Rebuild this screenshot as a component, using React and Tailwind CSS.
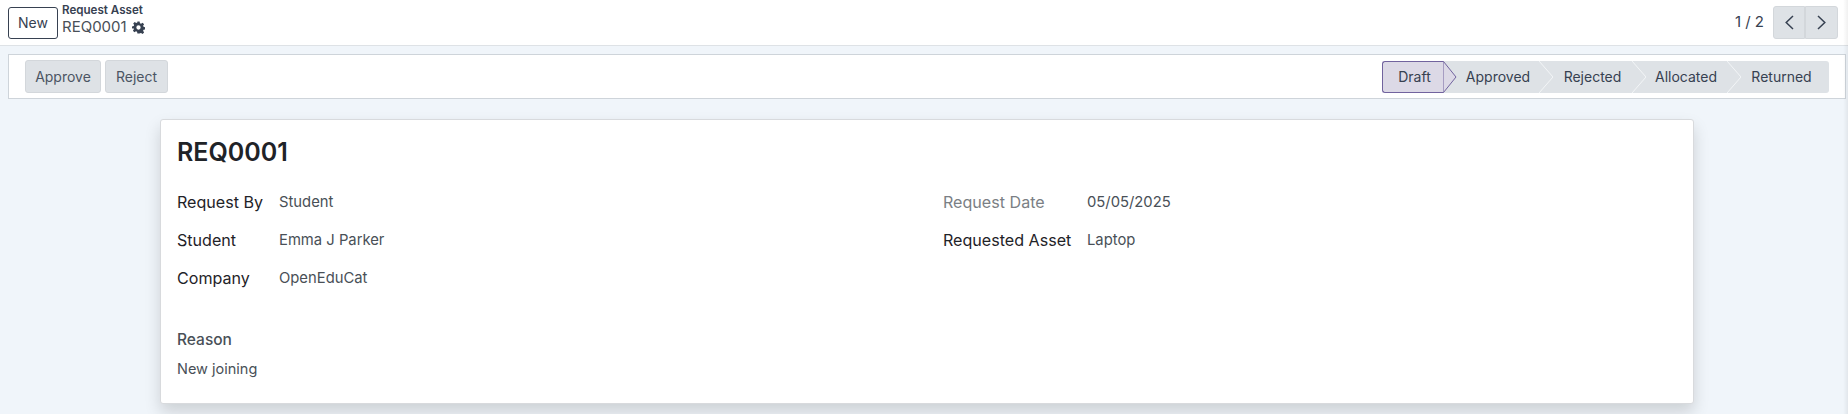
import React from "react";

const Gear = () => (
  <svg width="13" height="13" viewBox="0 0 24 24" className="ml-[5px] mt-[1px]">
    <path fill="#374151" fillRule="evenodd" d="M10 1h4l.7 3.2 2 .8 2.8-1.8 2.8 2.8-1.8 2.8.8 2 3.2.7v4l-3.2.7-.8 2 1.800 2.800-2.800 2.800-2.800-1.800-2 .8L14 23h-4l-.7-3.200-2-.8-2.800 1.800-2.800-2.800 1.800-2.800-.8-2L0 14v-4l3.200-.7.8-2L2.200 4.500 5 1.700l2.800 1.800 2-.8zM12 8a4 4 0 1 0 0 8 4 4 0 0 0 0-8z" />
  </svg>
);

const Chevron = ({ d }) => (
  <svg width="9" height="15" viewBox="0 0 9 15" fill="none" stroke="#374151" strokeWidth="1.500">
    <path d={d} />
  </svg>
);

const Stage = ({ label, active, w }) => (
  <div className={`relative h-[32px] flex items-center justify-center ${w} ${active ? "bg-[#dcd9e6] border border-[#71639e] border-r-0 rounded-l-[3px] z-10 pl-[3px]" : "bg-[#dee2e6]"}`}>
    <span className="text-[14px] text-[#374151]">{label}</span>
    {active ? (
      <svg className="absolute left-full -top-px" width="14" height="32" viewBox="0 0 14 32">
        <path d="M0 0.500 L0.500 0.500 L13 16 L0.500 31.500 L0 31.500 Z" fill="#dcd9e6" stroke="#71639e" />
      </svg>
    ) : null}
  </div>
);

const Sep = () => (
  <svg className="absolute left-full top-0 z-[5]" width="14" height="32" viewBox="0 0 14 32">
    <path d="M0 0 L14 16 L0 32" fill="#dee2e6" stroke="#f3f5f7" strokeWidth="1" />
  </svg>
);

const Field = ({ label, value, muted, w }) => (
  <div className="flex items-center h-[38px]">
    <div className={`${w} text-[16.100px] ${muted ? "text-[#7b7f85]" : "text-[#1f2328]"}`}>{label}</div>
    <div className="text-[14.800px] text-[#495057]">{value}</div>
  </div>
);

export default function App() {
  return (
    <div className="relative w-[1848px] h-[414px] overflow-hidden bg-[#f0f5fa] font-['Inter',sans-serif]">
      <div className="h-[46px] bg-white border-b border-[#dee2e6] flex items-center pl-[8px] pr-[10px]">
        <button className="w-[50px] h-[32px] rounded-[3px] border border-[#374151] bg-white text-[14px] text-[#374151]">New</button>
        <div className="ml-[4px] flex flex-col -mt-[5px]">
          <div className="text-[11.600px] leading-[14px] font-semibold text-[#374151] h-[14px]">Request Asset</div>
          <div className="flex items-center text-[15px] leading-[20px] text-[#495057] h-[20px]">REQ0001<Gear /></div>
        </div>
        <div className="ml-auto flex items-center">
          <span className="text-[15px] text-[#374151] mr-[9px]">1 / 2</span>
          <button className="w-[32px] h-[33px] bg-[#dee2e6] border border-[#d3d7db] rounded-l-[3px] flex items-center justify-center"><Chevron d="M8 1 L1.200 7.500 L8 14" /></button>
          <button className="w-[33px] h-[33px] bg-[#dee2e6] border border-[#d3d7db] rounded-r-[3px] flex items-center justify-center"><Chevron d="M1 1 L7.800 7.500 L1 14" /></button>
        </div>
      </div>

      <div className="ml-[8px] mt-[8px] w-[1838px] h-[45px] bg-white border border-[#ced4da] flex items-center pl-[16px] pr-[16px]">
        <button className="h-[33px] w-[76px] rounded-[3px] bg-[#dee2e6] border border-[#d3d7db] text-[14px] text-[#4b5563]">Approve</button>
        <button className="ml-[4px] h-[33px] w-[63px] rounded-[3px] bg-[#dee2e6] border border-[#d3d7db] text-[14px] text-[#4b5563]">Reject</button>
        <div className="ml-auto flex items-center">
          <Stage label="Draft" active w="w-[61px]" />
          <div className="relative"><Stage label="Approved" w="w-[96px] pl-[14px]" /><Sep /></div>
          <div className="relative"><Stage label="Rejected" w="w-[93px] pl-[14px]" /><Sep /></div>
          <div className="relative"><Stage label="Allocated" w="w-[95px] pl-[13px]" /><Sep /></div>
          <div className="rounded-r-[3px] overflow-hidden"><Stage label="Returned" w="w-[102px] pl-[7px]" /></div>
        </div>
      </div>

      <div className="mx-[160px] mt-[20px] w-[1534px] h-[285px] bg-white border border-[#d8dadd] rounded-[3px] shadow-[0_8px_16px_rgba(0,0,0,0.15)] px-[16px] pt-[16px] box-border">
        <h1 className="text-[25px] leading-[32px] font-semibold text-[#1f2328]">REQ0001</h1>
        <div className="grid grid-cols-2 gap-x-[32px] mt-[15px]">
          <div>
            <Field label="Request By" value="Student" w="w-[102px]" />
            <Field label="Student" value="Emma J Parker" w="w-[102px]" />
            <Field label="Company" value="OpenEduCat" w="w-[102px]" />
          </div>
          <div>
            <Field label="Request Date" value="05/05/2025" muted w="w-[144px]" />
            <Field label="Requested Asset" value="Laptop" w="w-[144px]" />
          </div>
        </div>
        <div className="mt-[31px] text-[15.500px] leading-[24px] font-medium text-[#495057]">Reason</div>
        <div className="mt-[7px] text-[14.500px] leading-[20px] text-[#495057]">New joining</div>
      </div>

      <div className="absolute top-0 right-0 bottom-0 w-[5px] bg-gradient-to-r from-[#00000000] to-[#0000000f]" />
    </div>
  );
}
